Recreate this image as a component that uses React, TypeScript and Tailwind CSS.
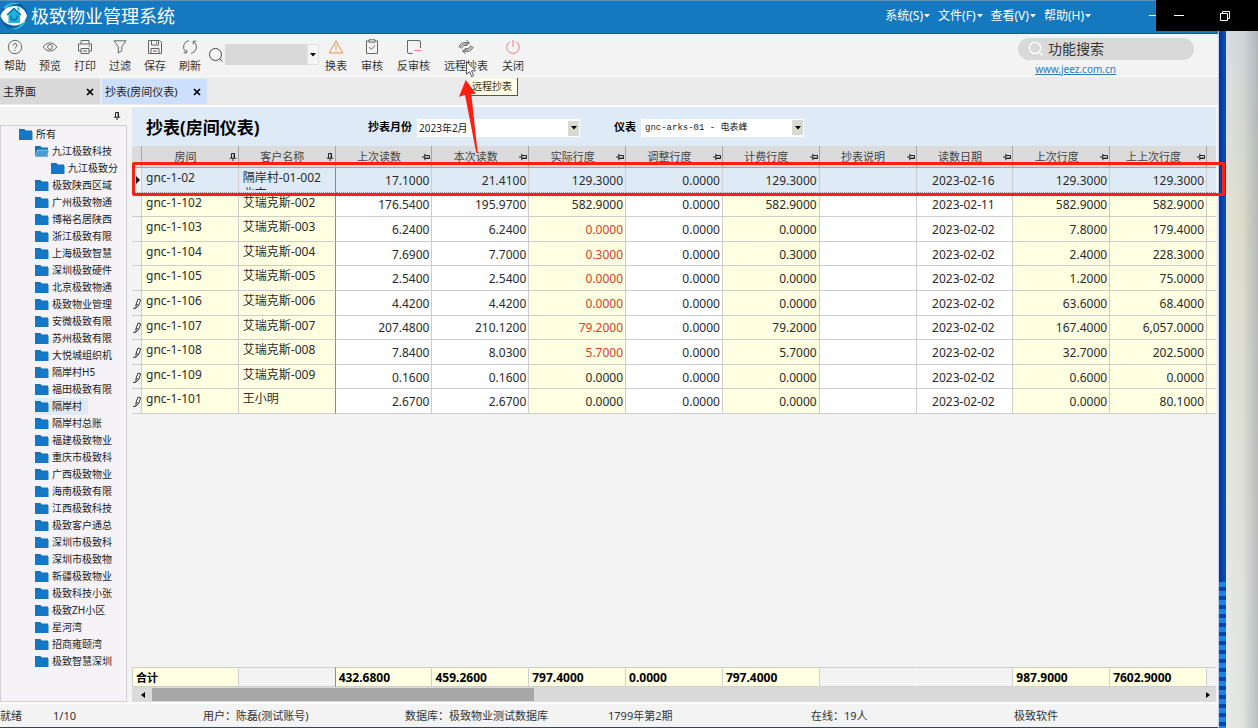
import type { ReactNode } from "react";
import { clsx } from "clsx";

type TreeItem = { name: string; level: 0 | 1 | 2; open?: boolean; selected?: boolean };

const tree: TreeItem[] = [
  { name: "所有", level: 0 },
  { name: "九江极致科技", level: 1, open: true },
  { name: "九江极致分", level: 2 },
  { name: "极致陕西区域", level: 1 },
  { name: "广州极致物通", level: 1 },
  { name: "博裕名居陕西", level: 1 },
  { name: "浙江极致有限", level: 1 },
  { name: "上海极致智慧", level: 1 },
  { name: "深圳极致硬件", level: 1 },
  { name: "北京极致物通", level: 1 },
  { name: "极致物业管理", level: 1 },
  { name: "安微极致有限", level: 1 },
  { name: "苏州极致有限", level: 1 },
  { name: "大悦城组织机", level: 1 },
  { name: "隔岸村H5", level: 1 },
  { name: "福田极致有限", level: 1 },
  { name: "隔岸村", level: 1, selected: true },
  { name: "隔岸村总账", level: 1 },
  { name: "福建极致物业", level: 1 },
  { name: "重庆市极致科", level: 1 },
  { name: "广西极致物业", level: 1 },
  { name: "海南极致有限", level: 1 },
  { name: "江西极致科技", level: 1 },
  { name: "极致客户通总", level: 1 },
  { name: "深圳市极致科", level: 1 },
  { name: "深圳市极致物", level: 1 },
  { name: "新疆极致物业", level: 1 },
  { name: "极致科技小张", level: 1 },
  { name: "极致ZH小区", level: 1 },
  { name: "星河湾", level: 1 },
  { name: "招商雍颐湾", level: 1 },
  { name: "极致智慧深圳", level: 1 },
];

const indent = { 0: "pl-[18px]", 1: "pl-[34px]", 2: "pl-[50px]" };

const columns = [
  { title: "房间", pinned: true, cream: true, total: "" },
  { title: "客户名称", pinned: true, cream: true, total: "" },
  { title: "上次读数", total: "432.6800" },
  { title: "本次读数", total: "459.2600" },
  { title: "实际行度", cream: true, total: "797.4000" },
  { title: "调整行度", total: "0.0000" },
  { title: "计费行度", cream: true, total: "797.4000" },
  { title: "抄表说明", total: "" },
  { title: "读数日期", total: "" },
  { title: "上次行度", cream: true, total: "987.9000" },
  { title: "上上次行度", cream: true, total: "7602.9000" },
];

const rows = [
  { mark: "current", cells: ["gnc-1-02", "隔岸村-01-002 北京", "17.1000", "21.4100", "129.3000", "0.0000", "129.3000", "", "2023-02-16", "129.3000", "129.3000"] },
  { cells: ["gnc-1-102", "艾瑞克斯-002", "176.5400", "195.9700", "582.9000", "0.0000", "582.9000", "", "2023-02-11", "582.9000", "582.9000"] },
  { warn: true, cells: ["gnc-1-103", "艾瑞克斯-003", "6.2400", "6.2400", "0.0000", "0.0000", "0.0000", "", "2023-02-02", "7.8000", "179.4000"] },
  { warn: true, cells: ["gnc-1-104", "艾瑞克斯-004", "7.6900", "7.7000", "0.3000", "0.0000", "0.3000", "", "2023-02-02", "2.4000", "228.3000"] },
  { warn: true, cells: ["gnc-1-105", "艾瑞克斯-005", "2.5400", "2.5400", "0.0000", "0.0000", "0.0000", "", "2023-02-02", "1.2000", "75.0000"] },
  { mark: "edited", warn: true, cells: ["gnc-1-106", "艾瑞克斯-006", "4.4200", "4.4200", "0.0000", "0.0000", "0.0000", "", "2023-02-02", "63.6000", "68.4000"] },
  { mark: "edited", warn: true, cells: ["gnc-1-107", "艾瑞克斯-007", "207.4800", "210.1200", "79.2000", "0.0000", "79.2000", "", "2023-02-02", "167.4000", "6,057.0000"] },
  { mark: "edited", warn: true, cells: ["gnc-1-108", "艾瑞克斯-008", "7.8400", "8.0300", "5.7000", "0.0000", "5.7000", "", "2023-02-02", "32.7000", "202.5000"] },
  { mark: "edited", cells: ["gnc-1-109", "艾瑞克斯-009", "0.1600", "0.1600", "0.0000", "0.0000", "0.0000", "", "2023-02-02", "0.6000", "0.0000"] },
  { mark: "edited", cells: ["gnc-1-101", "王小明", "2.6700", "2.6700", "0.0000", "0.0000", "0.0000", "", "2023-02-02", "0.0000", "80.1000"] },
];

function Icon({ children, className }: { children: ReactNode; className?: string }) {
  return (
    <svg
      viewBox="0 0 16 16"
      className={clsx("size-4 shrink-0", className)}
      fill="none"
      stroke="currentColor"
      aria-hidden="true"
    >
      {children}
    </svg>
  );
}

function Caret({ className }: { className?: string }) {
  return (
    <svg viewBox="0 0 6 4" className={clsx("h-1 w-1.5", className)} fill="currentColor" aria-hidden="true">
      <path d="M0 0h6L3 3.5z" />
    </svg>
  );
}

function Pin({ down }: { down?: boolean }) {
  return (
    <svg viewBox="0 0 8 8" className="size-2 shrink-0" fill="none" stroke="#222" aria-hidden="true">
      {down ? (
        <>
          <path d="M2.5 5V.5h3V5M.8 5.2h6.4M4 5.5V8" />
          <path d="M5.3 .5V5" strokeWidth="1.4" />
        </>
      ) : (
        <>
          <path d="M3 2.5h4.5v3H3M2.8 .8v6.4M2.5 4H0" />
          <path d="M3 5.3h4.5" strokeWidth="1.4" />
        </>
      )}
    </svg>
  );
}

function Folder({ open }: { open?: boolean }) {
  return (
    <svg viewBox="0 0 14 11" className="h-[11px] w-3.5 shrink-0" aria-hidden="true">
      <path d="M0 0h5.5l1.2 1.6H13V11H0z" fill="#1173bb" />
      {open ? (
        <path d="M2.6 4H14l-2 7H0z" fill="#4c9ad2" stroke="#e8f4ff" strokeWidth=".5" />
      ) : (
        <path d="M0 2.6h13.5V11H0z" fill="#1478c4" />
      )}
    </svg>
  );
}

function Logo() {
  return (
    <svg viewBox="0 0 28 28" className="size-7 shrink-0" aria-hidden="true">
      <circle cx="14" cy="14" r="13.5" fill="#0c5c9f" />
      <path d="M3 6A13.500 13.500 0 0 1 20 2c-6 0-11 1-14 5z" fill="#35b6e0" />
      <path d="M26 19A13.500 13.500 0 0 1 9 26.500c8 .500 13-3 15-8z" fill="#35c4e4" />
      <path d="M.500 14C3 5 13 2 20 5c4 2 6 5 7 9-2 8-10 11-16 9C5 22 2 18 .500 14z" fill="#fff" />
      <path d="M14 6l7.500 7H20v8H8.500v-8H6.500z" fill="#1cb4dc" />
      <path d="M17 6v-.500h2.500V11z" fill="#1cb4dc" />
      <path d="M7 13l7-6.500 7 6.500M11 13.500v1.500a3 3 0 0 0 6 0v-1.500" fill="none" stroke="#0a6fae" strokeWidth="1.300" />
    </svg>
  );
}

function ToolButton({ label, icon, children }: { label: string; icon: ReactNode; children?: ReactNode }) {
  return (
    <button type="button" className="relative flex flex-col items-center gap-[3px] pt-[5px] text-[#666]">
      {icon}
      <span className="leading-4 whitespace-nowrap text-[#333]">{label}</span>
      {children}
    </button>
  );
}

function Combo({ id, value, className }: { id: string; value: string; className?: string }) {
  return (
    <div className="relative w-[163px]">
      <select id={id} className={clsx("h-[18px] w-full appearance-none bg-white pr-4 leading-[18px] text-[#222]", className)}>
        <option>{value}</option>
      </select>
      <span className="pointer-events-none absolute top-[2px] right-px flex h-[15px] w-[11px] items-center justify-center bg-[#dad9d2] text-black">
        <Caret />
      </span>
    </div>
  );
}

function Columns() {
  return (
    <colgroup>
      <col className="w-[10px]" />
      {columns.map((c) => (
        <col key={c.title} />
      ))}
      <col className="w-[9px]" />
    </colgroup>
  );
}

function TitleBar() {
  return (
    <header className="flex h-[34px] shrink-0 items-center border-t border-b border-t-[#5f8fb4] border-b-[#0b5c9e] bg-[#1479bf] pb-[3px] text-white">
      <Logo />
      <h1 className="ml-[3px] text-[18px] leading-6">极致物业管理系统</h1>
      <nav className="mr-[58px] ml-auto flex gap-2 text-[12px]">
        {["系统(S)", "文件(F)", "查看(V)", "帮助(H)"].map((m) => (
          <button key={m} type="button" className="flex items-center leading-4">
            {m}
            <Caret className="ml-px" />
          </button>
        ))}
      </nav>
      <button type="button" aria-label="最小化" className="mr-[58px] h-px w-[11px] bg-white" />
    </header>
  );
}

function Toolbar() {
  return (
    <div className="flex h-[43px] shrink-0 items-start border-b border-white bg-[#f3f3f3] pl-1">
      <div className="flex gap-[13px]">
        <ToolButton
          label="帮助"
          icon={
            <Icon>
              <circle cx="8" cy="8" r="6.7" />
              <path d="M6 6.4a2 2 0 1 1 2.8 1.9c-.6.3-.8.6-.8 1.3M8 10.8v1.2" />
            </Icon>
          }
        />
        <ToolButton
          label="预览"
          icon={
            <Icon>
              <path d="M1.3 8C4.5 2.6 11.5 2.6 14.7 8 11.5 13.4 4.5 13.4 1.3 8z" />
              <circle cx="8" cy="8" r="2.4" />
            </Icon>
          }
        />
        <ToolButton
          label="打印"
          icon={
            <Icon>
              <path d="M4 5V1.5h8V5M4 12H1.5V5h13v7H12M4 9.5h8v5H4zM6 12h4M11.5 7.2H13" />
            </Icon>
          }
        />
        <ToolButton
          label="过滤"
          icon={
            <Icon>
              <path d="M2 1.8h12L9.8 7.5v4.3L6.3 14V7.5z" />
            </Icon>
          }
        />
        <ToolButton
          label="保存"
          icon={
            <Icon>
              <path d="M1.5 1.5h11l2 2v11h-13zM4.5 1.5V6h7V1.5M9.5 2.5v2M4 14.5v-5h8v5M6 12h4" />
            </Icon>
          }
        />
        <ToolButton
          label="刷新"
          icon={
            <Icon>
              <path d="M7 1.6A6.5 6.5 0 0 0 3.3 12.500L4.500 13.500M9 14.400A6.500 6.500 0 0 0 12.700 3.500L11.500 2.500" />
              <path d="M4.800 10.800v3H1.800M11.200 5.200v-3h3" />
            </Icon>
          }
        />
      </div>

      <div className="ml-[7px] flex items-center gap-px pt-[10px]">
        <label htmlFor="quick" aria-label="查找" className="text-[#444]">
          <Icon>
            <circle cx="7.5" cy="7.5" r="6" />
            <path d="M12 12l2.5 2.7" />
          </Icon>
        </label>
        <div className="relative w-[94px]">
          <select id="quick" className="h-[21px] w-full appearance-none bg-[#d9d9d9]">
            <option> </option>
          </select>
          <span className="pointer-events-none absolute inset-y-0 right-0 flex w-3 items-center justify-center border border-[#e0e0e0] bg-[#f6f6f6] text-black">
            <Caret />
          </span>
        </div>
      </div>

      <div className="ml-[6px] flex gap-[14px]">
        <ToolButton
          label="换表"
          icon={
            <Icon className="text-[#ef8b4a]">
              <path d="M8 1.8L14.8 14H1.2zM8 6v4.5M8 11.5v1.3" />
            </Icon>
          }
        />
        <ToolButton
          label="审核"
          icon={
            <Icon>
              <path d="M5 2H2.5v12.5h11V2H11M5 .8h6v2.4H5zM5 8l2.3 2.3L11.2 6.5" />
            </Icon>
          }
        />
        <ToolButton
          label="反审核"
          icon={
            <Icon>
              <path d="M6.5 14.5H3A1.5 1.5 0 0 1 1.5 13V1.5H13A1.5 1.5 0 0 1 14.5 3v6" />
              <path d="M8 11.5h7" stroke="#f08080" />
            </Icon>
          }
        />
        <ToolButton
          label="远程抄表"
          icon={
            <Icon>
              <path d="M1 8.500C1.500 4.500 6 2.500 11 4M8.500 1l3 3.200-4 1.800M3.500 9.500C4 6.800 6.500 5.800 9 6.500M15 7.500c-.500 4-5 6-10 4.500M7.500 15l-3-3.200 4-1.800M12.500 6.500c-.500 2.700-3 3.700-5.500 3" />
              <path d="M2.200 9C2.800 5.700 6 4 10 5.200M13.800 7c-.600 3.300-3.800 5-7.800 3.800" strokeWidth=".8" />
            </Icon>
          }
        >
          <span
            role="tooltip"
            className="absolute top-[44px] left-[26px] z-10 h-[18px] border-r border-b border-[#555] bg-[#ffffe6] pr-[5px] pl-[2px] text-[10px] leading-[17px] whitespace-nowrap text-[#333]"
          >
            远程抄表
          </span>
        </ToolButton>
        <ToolButton
          label="关闭"
          icon={
            <Icon className="text-[#ec7f7f]">
              <path d="M8 1v7M5 2.8a6.2 6.2 0 1 0 6 0" />
            </Icon>
          }
        />
      </div>

      <div className="mr-6 ml-auto flex w-44 flex-col items-center pt-1">
        <label className="flex h-[22px] w-full items-center gap-1 rounded-full bg-[#d9d9d9] pl-[10px] text-white">
          <Icon>
            <circle cx="7" cy="7" r="5.7" strokeWidth="1.3" />
            <path d="M11.5 11.5l3 3" strokeWidth="1.3" />
          </Icon>
          <input
            type="text"
            aria-label="功能搜索"
            placeholder="功能搜索"
            className="w-28 bg-transparent text-[14px] leading-5 placeholder:text-[#333] focus:outline-none"
          />
        </label>
        <a href="#site" className="mr-[78px] self-end text-[10px] leading-[18px] text-[#2b7bbf] underline">
          www.jeez.com.cn
        </a>
      </div>
    </div>
  );
}

function Tab({ label, active }: { label: string; active?: boolean }) {
  return (
    <div className={clsx("flex items-center justify-between pr-[6px] pl-[3px] text-[#222]", active ? "w-[105px] bg-[#cce0fd]" : "w-[100px] bg-[#d9d9d9]")}>
      <button type="button" role="tab" aria-selected={!!active} className="leading-4 whitespace-nowrap">
        {label}
      </button>
      <button type="button" aria-label="关闭" className="text-black">
        <svg viewBox="0 0 8 8" className="size-2" fill="none" stroke="currentColor" strokeWidth="1.7">
          <path d="M1 1l6 6M7 1L1 7" />
        </svg>
      </button>
    </div>
  );
}

function Sidebar() {
  return (
    <aside className="flex w-[127px] shrink-0 flex-col">
      <div className="flex h-[18px] items-center justify-end pr-[6px]">
        <Pin down />
      </div>
      <ul className="flex-1 border border-[#cfcfd4] bg-[#f5f3f8] text-[10px] text-[#222]">
        {tree.map((item) => (
          <li key={item.name} className={indent[item.level]}>
            <button
              type="button"
              className={clsx("flex h-[17px] items-center gap-[3px] leading-[17px] whitespace-nowrap", item.selected && "bg-[#deebf7] pr-[6px]")}
            >
              <Folder open={item.open} />
              {item.name}
            </button>
          </li>
        ))}
      </ul>
    </aside>
  );
}

function RowMark({ mark }: { mark?: string }) {
  if (mark === "current") {
    return (
      <svg viewBox="0 0 4 8" className="ml-1 h-2 w-1" aria-hidden="true">
        <path d="M0 0l4 4-4 4z" />
      </svg>
    );
  }
  if (mark === "edited") {
    return (
      <svg viewBox="0 0 9 12" className="h-3 w-[9px]" fill="none" stroke="#222" strokeWidth=".9" aria-hidden="true">
        <path d="M4 7.500L6 2l2.600.800L6.800 8.300 4 11zM4 7.500l2.800.800M1 11.300h3" fill="#fff" />
      </svg>
    );
  }
  return null;
}

function MeterTable() {
  return (
    <div className="relative">
      <table className="h-[268px] w-full table-fixed border-separate border-spacing-0 text-[12px] text-[#2b2b2b]">
        <Columns />
        <thead>
          <tr className="h-[22px] bg-[#dbdbdb] text-[11px] text-[#444]">
            <th className="border-r border-b border-[#a5a5a5] p-0" />
            {columns.map((c) => (
              <th key={c.title} className="border-r border-b border-[#a5a5a5] p-0 font-normal">
                <div className="flex items-center pr-px leading-5">
                  <span className="flex-1 text-center">{c.title}</span>
                  <Pin down={c.pinned} />
                </div>
              </th>
            ))}
            <th className="border-b border-[#a5a5a5] p-0" />
          </tr>
        </thead>
        <tbody>
          {rows.map((row) => {
            const current = row.mark === "current";
            const line = current ? "border-b border-b-[#9a9a9a] [border-bottom-style:dotted]" : "border-b border-b-[#cdcdcd]";
            return (
              <tr key={row.cells[0]} className={clsx(current && "bg-[#deebf7]")}>
                <td className={clsx("border-r border-r-[#cdcdcd] bg-[#f3f3f3] p-0", line)}>
                  <RowMark mark={row.mark} />
                </td>
                {row.cells.map((cell, i) => (
                  <td
                    key={i}
                    className={clsx(
                      "overflow-hidden border-r p-0 leading-4",
                      line,
                      i === 1 ? "border-r-[#8c8c8c]" : "border-r-[#cdcdcd]",
                      !current && (columns[i].cream ? "bg-[#ffffe1]" : "bg-white"),
                      i < 2 ? "pl-1 align-top" : "pt-[2px] pr-[2px]",
                      i === 8 ? "text-center" : i > 1 && "text-right",
                      i === 4 && row.warn && "text-[#d9402c]"
                    )}
                  >
                    {i < 2 ? <div className="mt-[2px] h-5 w-[84px] overflow-hidden">{cell}</div> : cell}
                  </td>
                ))}
                <td className={clsx("p-0", line, !current && "bg-[#ffffe1]")} />
              </tr>
            );
          })}
        </tbody>
      </table>
      {/* highlight around the current row */}
      <div className="pointer-events-none absolute top-4 -right-[9px] left-0 z-20 h-[34px] rounded-[2px] border-[3px] border-[#fc2010]" />
    </div>
  );
}

function TotalsRow() {
  return (
    <table className="mt-auto w-full table-fixed border-separate border-spacing-0 text-[12px] text-black">
      <Columns />
      <tbody>
        <tr className="h-5 text-left leading-4">
          <th colSpan={2} className="border border-[#d0d0d0] bg-[#ffffe1] p-0 pt-px pl-[3px] text-[11px] font-bold">
            合计
          </th>
          {columns.slice(1).map((c) => (
            <td
              key={c.title}
              className={clsx(
                "border-y border-r border-y-[#d0d0d0] p-0 pt-[2px] pl-[3px] font-bold",
                c.pinned ? "border-r-[#8c8c8c]" : c.title === "抄表说明" ? "border-r-transparent" : "border-r-[#d0d0d0]",
                c.total && "bg-[#ffffe1]"
              )}
            >
              {c.total}
            </td>
          ))}
          <td className="border-y border-[#d0d0d0] p-0" />
        </tr>
      </tbody>
    </table>
  );
}

function StatusBar() {
  return (
    <footer className="flex h-[26px] shrink-0 items-center border-t-2 border-b border-t-white border-b-[#39424f] bg-[#f3f3f3] pt-px leading-4 whitespace-nowrap text-[#333]">
      <span className="w-[53px]">就绪</span>
      <span className="w-[150px]">1/10</span>
      <span className="w-[202px]">用户：陈磊(测试账号)</span>
      <span className="w-[203px]">数据库：极致物业测试数据库</span>
      <span className="w-[203px]">1799年第2期</span>
      <span className="w-[203px]">在线：19人</span>
      <span>极致软件</span>
    </footer>
  );
}

export default function App() {
  return (
    <div className="relative flex h-screen min-h-[728px] w-full bg-[#f3f3f3] font-['Noto_Sans','Noto_Sans_CJK_SC',sans-serif] text-[11px]">
      <div className="flex min-w-0 flex-1 flex-col">
        <TitleBar />
        <Toolbar />
        <div role="tablist" className="flex h-[30px] shrink-0 gap-[2px] border-b-2 border-white bg-[#ebebeb] pt-[2px] pb-px">
          <Tab label="主界面" />
          <Tab label="抄表(房间仪表)" active />
        </div>

        <div className="flex min-h-0 flex-1 gap-[5px] pr-[2px]">
          <Sidebar />
          <main className="flex min-w-0 flex-1 flex-col">
            <div className="flex h-[39px] shrink-0 items-center bg-[#deebf7] pt-[2px] pl-[14px]">
              <h2 className="w-[222px] text-[17px] leading-6 font-bold text-black">抄表(房间仪表)</h2>
              <label htmlFor="month" className="w-[49px] font-bold text-black">
                抄表月份
              </label>
              <Combo id="month" value="2023年2月" className="pl-[2px] text-[10px]" />
              <label htmlFor="meter" className="ml-[34px] w-[27px] font-bold text-black">
                仪表
              </label>
              <Combo id="meter" value="gnc-arks-01 - 电表峰" className="pl-1 font-['Liberation_Mono','Noto_Sans_CJK_SC',monospace] text-[9px]" />
            </div>

            <MeterTable />
            <TotalsRow />

            <div className="flex h-[15px] shrink-0 items-center bg-[#dadada] pr-[6px] pl-[9px]">
              <svg viewBox="0 0 4 6" className="h-1.5 w-1" aria-hidden="true">
                <path d="M4 0v6L0 3z" />
              </svg>
              <div className="ml-[7px] h-[13px] w-5/14 bg-[#a7a7a7]" />
              <svg viewBox="0 0 4 6" className="ml-auto h-1.5 w-1" aria-hidden="true">
                <path d="M0 0v6l4-3z" />
              </svg>
            </div>
          </main>
        </div>

        <StatusBar />
      </div>

      {/* desktop showing behind the window */}
      <div className="flex w-2 shrink-0 flex-col border-l border-[#c5cfee] bg-linear-to-r from-[#0a2f9a] to-[#0656b4]">
        <div className="mt-auto h-[146px] bg-[repeating-linear-gradient(178deg,#1b84e6_0px,#1b84e6_5px,#0647a4_5px,#0647a4_9px)]" />
      </div>
      <div className="w-8 shrink-0 bg-linear-to-b from-[#cdd5dc] via-[#dcdccb] via-30% to-[#e2e4e2]">
        <div className="h-full bg-linear-to-r from-white/20 via-transparent to-[#8f99a3]/50" />
      </div>

      <div className="absolute top-0 right-0 z-30 flex h-[31px] w-[102px] items-center bg-black pl-[18px] text-white">
        <button type="button" aria-label="最小化" className="h-px w-[10px] bg-white" />
        <button type="button" aria-label="还原" className="ml-9">
          <svg viewBox="0 0 10 10" className="size-[10px]" fill="none" stroke="currentColor">
            <path d="M.5 2.5h7v7h-7zM2.5 2.5v-2h7v7h-2" />
          </svg>
        </button>
      </div>

      {/* arrow and mouse pointer */}
      <svg viewBox="0 0 24 94" className="pointer-events-none absolute top-[60px] left-[457px] z-20 h-[94px] w-6" aria-hidden="true">
        <path d="M8.7 20L19 33.7l-4.7.3L20.7 93h-1.400L8 35l-6 1.700z" fill="#fc2010" />
        <path d="M9.5 1.500v12.800l3-2.700 2.200 5 2-1-2.200-4.800h4z" fill="#fff" stroke="#444" strokeWidth=".9" />
      </svg>
    </div>
  );
}
